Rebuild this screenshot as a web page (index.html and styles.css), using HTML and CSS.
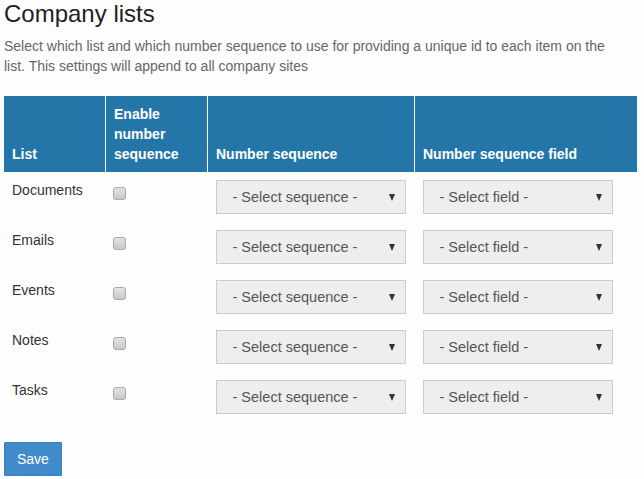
FILE: index.html
```html
<!DOCTYPE html>
<html lang="en">
<head>
    <meta charset="UTF-8">
    <title>Company lists</title>
    <link rel="stylesheet" href="styles.css">
</head>
<body>
    <div class="page">
        <h1>Company lists</h1>
        <p class="intro">Select which list and which number sequence to use for providing a unique id to each item on the list. This settings will append to all company sites</p>

        <table class="lists">
            <thead>
                <tr>
                    <th class="col-list">List</th>
                    <th class="col-enable">Enable number sequence</th>
                    <th class="col-seq">Number sequence</th>
                    <th class="col-field">Number sequence field</th>
                </tr>
            </thead>
            <tbody>
                <tr>
                    <td>Documents</td>
                    <td><input type="checkbox" class="check"></td>
                    <td><span class="select-wrap"><select><option>- Select sequence -</option></select></span></td>
                    <td><span class="select-wrap"><select><option>- Select field -</option></select></span></td>
                </tr>
                <tr>
                    <td>Emails</td>
                    <td><input type="checkbox" class="check"></td>
                    <td><span class="select-wrap"><select><option>- Select sequence -</option></select></span></td>
                    <td><span class="select-wrap"><select><option>- Select field -</option></select></span></td>
                </tr>
                <tr>
                    <td>Events</td>
                    <td><input type="checkbox" class="check"></td>
                    <td><span class="select-wrap"><select><option>- Select sequence -</option></select></span></td>
                    <td><span class="select-wrap"><select><option>- Select field -</option></select></span></td>
                </tr>
                <tr>
                    <td>Notes</td>
                    <td><input type="checkbox" class="check"></td>
                    <td><span class="select-wrap"><select><option>- Select sequence -</option></select></span></td>
                    <td><span class="select-wrap"><select><option>- Select field -</option></select></span></td>
                </tr>
                <tr>
                    <td>Tasks</td>
                    <td><input type="checkbox" class="check"></td>
                    <td><span class="select-wrap"><select><option>- Select sequence -</option></select></span></td>
                    <td><span class="select-wrap"><select><option>- Select field -</option></select></span></td>
                </tr>
            </tbody>
        </table>

        <button class="btn-save">Save</button>
    </div>
</body>
</html>
```

FILE: styles.css
```css
body {
    margin: 0;
    background: #fdfdfd;
    font-family: 'Liberation Sans', Arial, sans-serif;
    font-size: 14px;
    line-height: 20px;
    color: #333;
}

.page {
    padding: 0 4px;
}

h1 {
    margin: 0;
    font-size: 24px;
    font-weight: normal;
    line-height: 28px;
    color: #222;
}

.intro {
    max-width: 618px;
    margin: 8px 0 20px;
    color: #666;
}

.lists {
    width: 633px;
    border-collapse: collapse;
}

.lists th {
    background: #2476a9;
    color: #fff;
    text-align: left;
    vertical-align: bottom;
    padding: 8px;
    font-weight: bold;
    border-left: 1px solid #fff;
}

.lists th:first-child {
    border-left: none;
}

.col-list,
.col-enable {
    width: 85px;
}

.col-seq {
    width: 190px;
}

.lists td {
    vertical-align: top;
    padding: 8px;
}

.check {
    appearance: none;
    display: block;
    width: 13px;
    height: 13px;
    margin: 7px 0 0 -1px;
    border: 1px solid #a9a9a9;
    border-radius: 3px;
    background: linear-gradient(#e4e4e4, #c8c8c8);
}

.select-wrap {
    position: relative;
    display: block;
    width: 190px;
}

.select-wrap::after {
    content: "";
    position: absolute;
    right: 11px;
    top: 14px;
    border-left: 3.5px solid transparent;
    border-right: 3.5px solid transparent;
    border-top: 7px solid #333;
}

select {
    appearance: none;
    display: block;
    width: 190px;
    height: 34px;
    padding: 0 24px 0 16px;
    border: 1px solid #ccc;
    border-radius: 0;
    background: #eee;
    font-family: inherit;
    font-size: 14.5px;
    color: #555;
}

.btn-save {
    margin-top: 20px;
    padding: 6px 12px;
    border: 1px solid #3a80c0;
    border-radius: 1px;
    background: #428bca;
    color: #fff;
    font-family: inherit;
    font-size: 14px;
    line-height: 20px;
}
```
